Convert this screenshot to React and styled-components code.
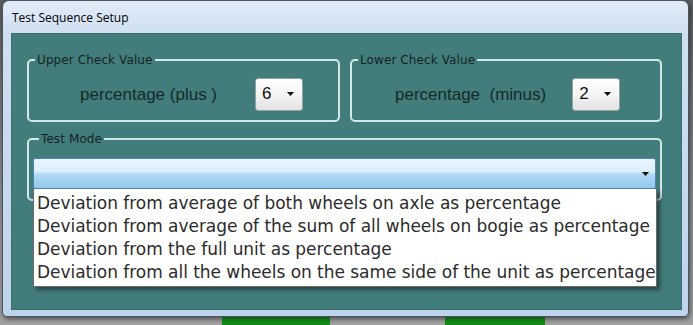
import React from "react";
import styled, { createGlobalStyle } from "styled-components";

const GlobalStyle = createGlobalStyle`
  html, body {
    margin: 0;
    padding: 0;
  }
  body {
    width: 693px;
    height: 325px;
    overflow: hidden;
    font-family: "Liberation Sans", Arial, sans-serif;
  }
`;

const testModes = [
  "Deviation from average of both wheels on axle as percentage",
  "Deviation from average of the sum of all wheels on bogie as percentage",
  "Deviation from the full unit as percentage",
  "Deviation from all the wheels on the same side of the unit as percentage",
];

const Caret = () => (
  <svg width="7" height="4" viewBox="0 0 7 4">
    <path d="M0 0 H7 L3.5 4 Z" fill="#111" />
  </svg>
);

const SmallSelect = ({ value }) => (
  <SelectBox>
    <span>{value}</span>
    <Caret />
  </SelectBox>
);

const App = () => {
  return (
    <Screen>
      <GlobalStyle />
      <Backdrop>
        <GreenButton $width={108} />
        <GreenButton $width={100} />
      </Backdrop>

      <Window>
        <TitleBar>Test Sequence Setup</TitleBar>
        <Client>
          <CheckRow>
            <Group>
              <Legend>Upper Check Value</Legend>
              <GroupRow $indent={51} $gap={38}>
                <Label>percentage (plus )</Label>
                <SmallSelect value="6" />
              </GroupRow>
            </Group>
            <Group>
              <Legend>Lower Check Value</Legend>
              <GroupRow $indent={43} $gap={26}>
                <Label>percentage  (minus)</Label>
                <SmallSelect value="2" />
              </GroupRow>
            </Group>
          </CheckRow>

          <ModeGroup>
            <Legend>Test Mode</Legend>
            <ComboWrap>
              <Combo>
                <Caret />
              </Combo>
              <OptionList>
                {testModes.map((mode) => (
                  <Option key={mode}>{mode}</Option>
                ))}
              </OptionList>
            </ComboWrap>
          </ModeGroup>

          <HiddenButtons>
            <HiddenLabel>Save</HiddenLabel>
            <HiddenLabel>Close</HiddenLabel>
          </HiddenButtons>
        </Client>
      </Window>
    </Screen>
  );
};

export default App;

const Screen = styled.div`
  position: relative;
  width: 693px;
  height: 325px;
  overflow: hidden;
  background: linear-gradient(180deg, #5c5c5c 0%, #8e8e8e 60%, #a2a2a2 100%);
`;

const Backdrop = styled.div`
  display: flex;
  gap: 115px;
  padding: 311px 0 0 222px;
`;

const GreenButton = styled.div`
  width: ${(props) => props.$width}px;
  height: 16px;
  background: linear-gradient(180deg, #4cc25a 0%, #1b9a24 40%, #0b850d 100%);
`;

const Window = styled.div`
  position: absolute;
  top: 0;
  left: 2px;
  width: 687px;
  height: 317px;
  box-sizing: border-box;
  display: flex;
  flex-direction: column;
  border: 1px solid #4b5661;
  border-radius: 7px 7px 5px 5px;
  background: linear-gradient(180deg, #e2ecf8 0px, #cfdff1 32px, #bed4ec 100%);
  box-shadow: 1px 2px 5px rgba(0, 0, 0, 0.55);
`;

const TitleBar = styled.div`
  height: 32px;
  display: flex;
  align-items: center;
  padding: 1px 0 0 9px;
  box-sizing: border-box;
  font-family: "Open Sans", "Noto Sans", sans-serif;
  font-size: 12px;
  color: #000;
`;

const Client = styled.div`
  position: relative;
  flex: 1;
  margin: 0 6px 6px 8px;
  padding: 21px 20px 0 16px;
  display: flex;
  flex-direction: column;
  gap: 11px;
  background: #437d7b;
  box-shadow: inset 0 0 0 1px #3b6f6d;
`;

const CheckRow = styled.div`
  display: grid;
  grid-template-columns: 313px 312px;
  column-gap: 10px;
`;

const Group = styled.fieldset`
  margin: 0;
  padding: 12px 0 9px 0;
  min-width: 0;
  box-sizing: border-box;
  border: 2px solid #d3e9e7;
  border-radius: 5px;
`;

const ModeGroup = styled(Group)`
  padding: 13px 4px 10px 4px;
`;

const Legend = styled.legend`
  margin-left: 6px;
  padding: 0 2px;
  font-family: "DejaVu Sans", sans-serif;
  font-size: 12px;
  line-height: 12px;
  letter-spacing: 0.1px;
  color: #132424;
`;

const GroupRow = styled.div`
  display: flex;
  align-items: center;
  gap: ${(props) => props.$gap}px;
  padding-left: ${(props) => props.$indent}px;
`;

const Label = styled.span`
  white-space: pre;
  font-family: "Liberation Sans", Arial, sans-serif;
  font-size: 17px;
  color: #142a29;
`;

const SelectBox = styled.div`
  width: 48px;
  height: 33px;
  box-sizing: border-box;
  display: flex;
  align-items: center;
  justify-content: space-between;
  padding: 0 8px 2px 6px;
  border: 1px solid #8fa3a3;
  border-radius: 3px;
  background: linear-gradient(180deg, #ffffff 0%, #f4f4f4 50%, #e2e2e2 100%);
  font-family: "Liberation Sans", Arial, sans-serif;
  font-size: 17px;
  color: #111;
`;

const ComboWrap = styled.div`
  position: relative;
`;

const Combo = styled.div`
  height: 31px;
  box-sizing: border-box;
  display: flex;
  align-items: center;
  justify-content: flex-end;
  padding-right: 6px;
  border: 1px solid #4f88b4;
  border-radius: 2px;
  background: linear-gradient(
    180deg,
    #eaf6fd 0%,
    #d9eefb 45%,
    #b0daf4 52%,
    #92c9ee 100%
  );
`;

const OptionList = styled.div`
  position: absolute;
  top: 100%;
  left: 0;
  right: -1px;
  z-index: 2;
  padding: 3px 0 2px 3px;
  overflow: hidden;
  background: #fff;
  border: 1px solid #6c6c6c;
  border-top: none;
  box-shadow: 3px 3px 4px rgba(0, 0, 0, 0.45);
`;

const Option = styled.div`
  height: 23px;
  line-height: 23px;
  white-space: nowrap;
  font-family: "DejaVu Sans", sans-serif;
  font-size: 17px;
  letter-spacing: -0.04px;
  color: #2b2b2b;
`;

const HiddenButtons = styled.div`
  display: flex;
  gap: 62px;
  margin-top: 61px;
  padding-left: 478px;
`;

const HiddenLabel = styled.span`
  font-family: "DejaVu Sans", sans-serif;
  font-size: 16px;
  line-height: 18px;
  color: #2f3a3a;
`;
